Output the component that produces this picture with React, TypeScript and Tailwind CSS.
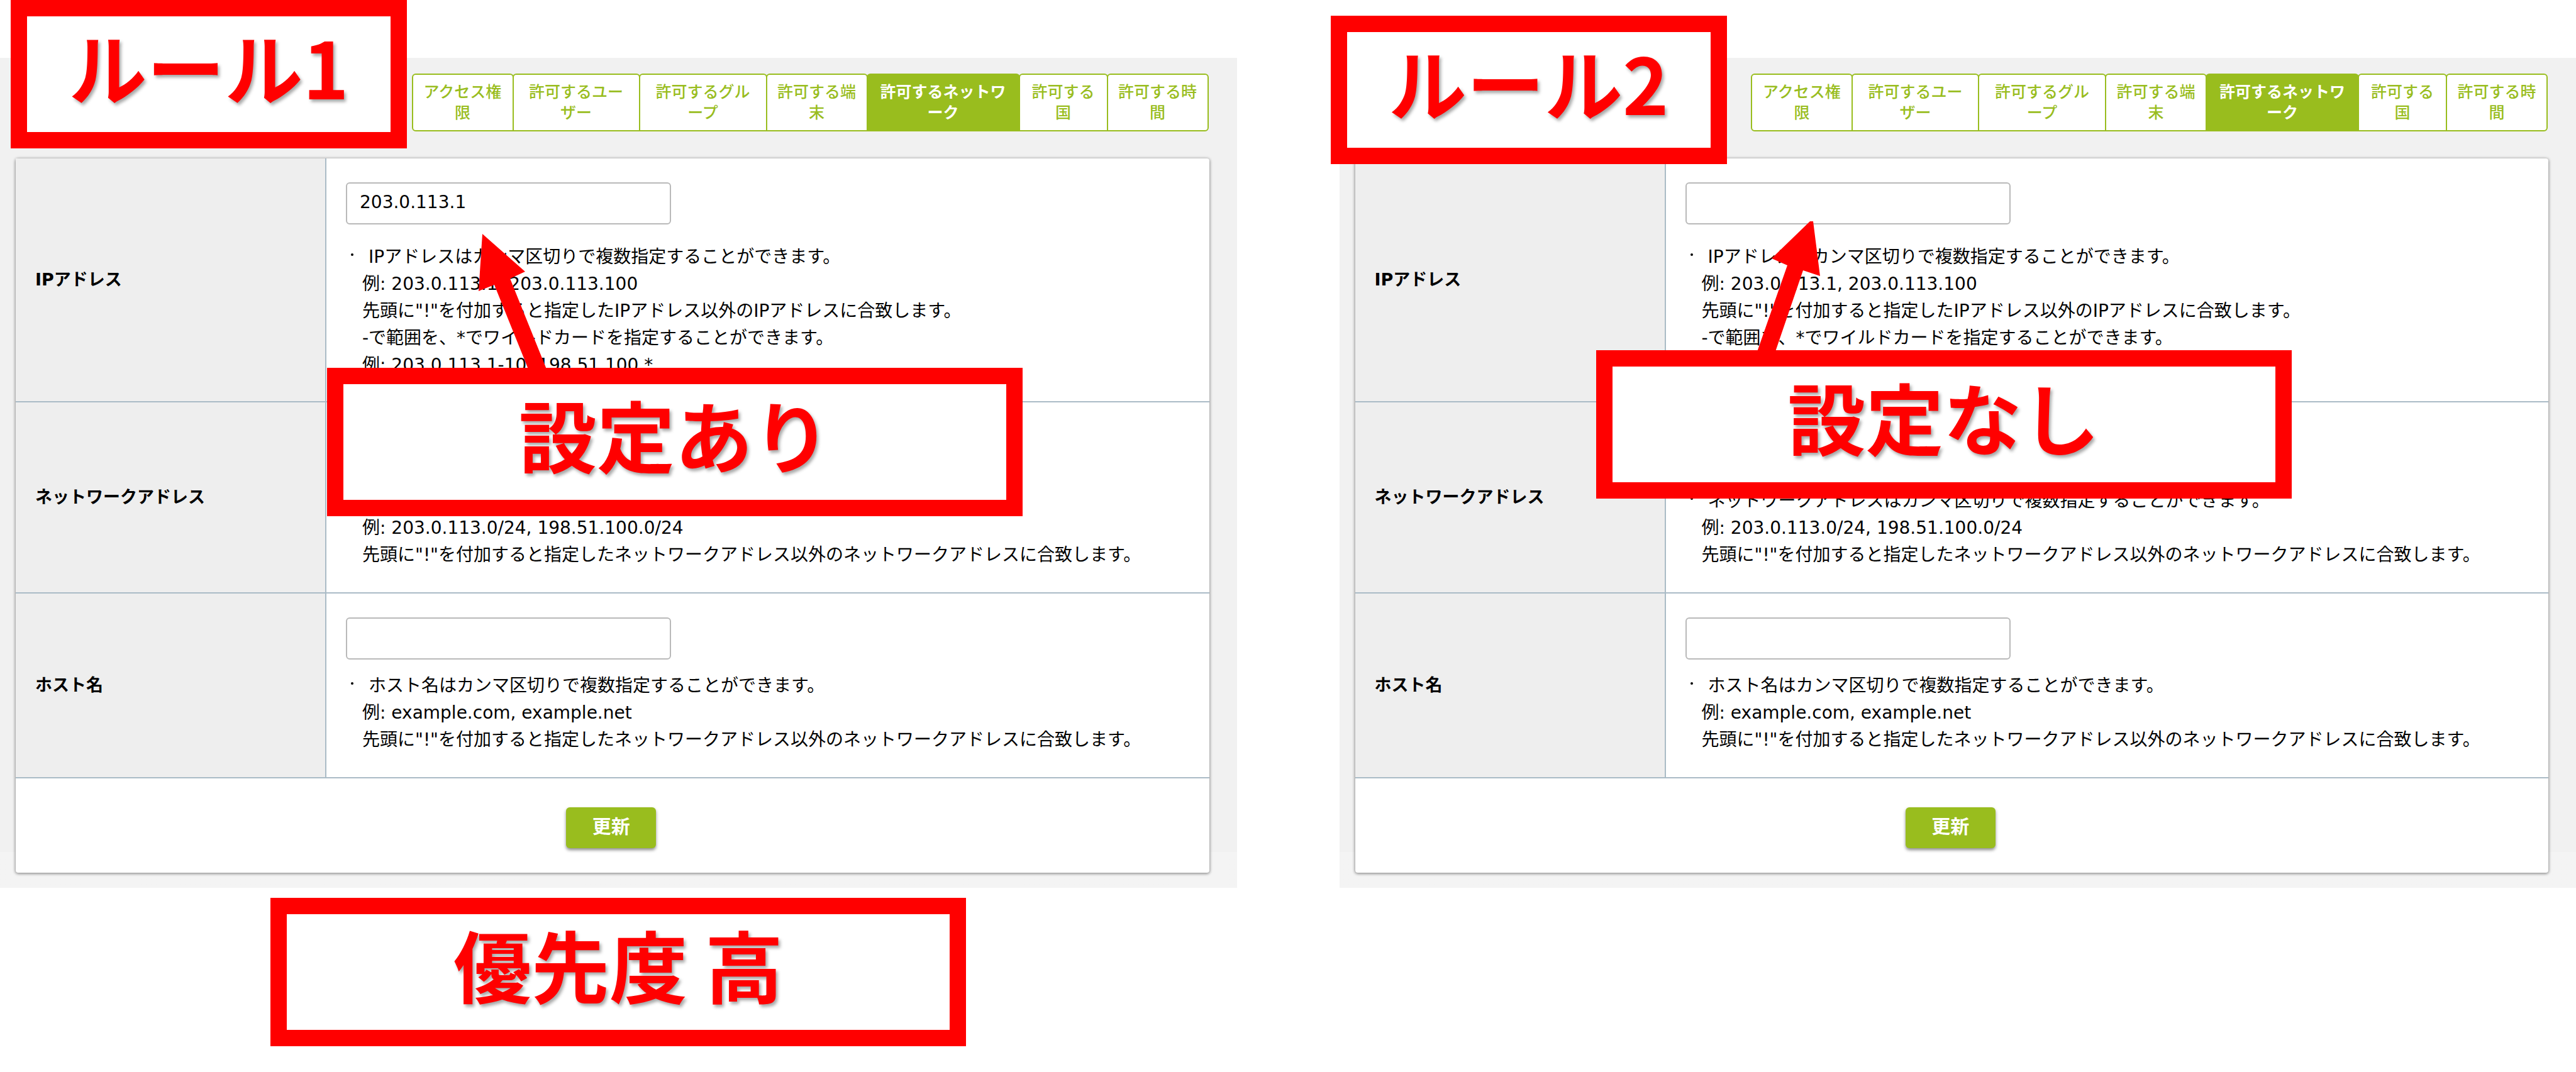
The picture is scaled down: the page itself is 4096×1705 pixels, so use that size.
import { useId } from 'react'
import type { ReactNode } from 'react'
import { clsx } from 'clsx'

interface Tab {
  label: string
  width: string
}

interface Field {
  label: string
  value: string
  hints: string[]
  cell: string
  gap: string
}

interface Callout {
  text: string
  box: string
}

interface RulePanelProps {
  title: Callout
  note: Callout
  fields: Field[]
  children: ReactNode
}

const ACTIVE_TAB = '許可するネットワーク'

const tabs: Tab[] = [
  { label: 'アクセス権限', width: 'w-[162px] px-3' },
  { label: '許可するユーザー', width: 'w-[203px] px-5' },
  { label: '許可するグループ', width: 'w-[204px] px-5' },
  { label: '許可する端末', width: 'w-[162px] px-3' },
  { label: '許可するネットワーク', width: 'w-[244px] px-4' },
  { label: '許可する国', width: 'w-[142px] px-4' },
  { label: '許可する時間', width: 'w-[162px] px-3' },
]

const baseFields: Field[] = [
  {
    label: 'IPアドレス',
    value: '',
    hints: [
      'IPアドレスはカンマ区切りで複数指定することができます。',
      '例: 203.0.113.1, 203.0.113.100',
      '先頭に"!"を付加すると指定したIPアドレス以外のIPアドレスに合致します。',
      '-で範囲を、*でワイルドカードを指定することができます。',
      '例: 203.0.113.1-10, 198.51.100.*',
    ],
    cell: 'pt-[38px] pb-9',
    gap: 'mt-[30px]',
  },
  {
    label: 'ネットワークアドレス',
    value: '',
    hints: [
      'ネットワークアドレスはカンマ区切りで複数指定することができます。',
      '例: 203.0.113.0/24, 198.51.100.0/24',
      '先頭に"!"を付加すると指定したネットワークアドレス以外のネットワークアドレスに合致します。',
    ],
    cell: 'pt-[38px] pb-[38px]',
    gap: 'mt-[30px]',
  },
  {
    label: 'ホスト名',
    value: '',
    hints: [
      'ホスト名はカンマ区切りで複数指定することができます。',
      '例: example.com, example.net',
      '先頭に"!"を付加すると指定したネットワークアドレス以外のネットワークアドレスに合致します。',
    ],
    cell: 'pt-[38px] pb-[38px]',
    gap: 'mt-5',
  },
]

const filledFields = baseFields.map((field, i) => (i === 0 ? { ...field, value: '203.0.113.1' } : field))

function CalloutBox({ text, box }: Callout) {
  return (
    <div
      className={clsx(
        "flex h-[236px] items-center justify-center border-[26px] border-[#ff0000] bg-white pb-7 font-['Noto_Sans_CJK_JP',sans-serif] text-[124px] leading-none font-bold whitespace-nowrap text-[#ff0000] [text-shadow:3px_4px_5px_rgba(0,0,0,0.35)]",
        box,
      )}
    >
      {text}
    </div>
  )
}

function TabBar() {
  return (
    <nav className="mr-[45px] flex justify-end">
      {tabs.map((tab, i) => (
        <button
          key={tab.label}
          type="button"
          className={clsx(
            'h-[92px] shrink-0 rounded-t-md border-2 border-[#99bd1e] text-center text-[25px] leading-[33px] break-all',
            tab.width,
            i > 0 && '-ml-0.5',
            i === 0 && 'rounded-bl-md',
            i === tabs.length - 1 && 'rounded-br-md',
            tab.label === ACTIVE_TAB ? 'bg-[#99bd1e] font-bold text-white' : 'bg-white font-medium text-[#99bd1e]',
          )}
        >
          {tab.label}
        </button>
      ))}
    </nav>
  )
}

function FieldRow({ label, value, hints, cell, gap }: Field) {
  const id = useId()

  return (
    <tr className="border-b-2 border-[#aabbc6]">
      <th
        scope="row"
        className="w-[493px] border-r-2 border-[#aabbc6] bg-[#eeeeee] pl-[31px] text-left text-[27px] font-bold"
      >
        <label htmlFor={id}>{label}</label>
      </th>
      <td className={clsx('pl-[31px]', cell)}>
        <input
          id={id}
          type="text"
          defaultValue={value}
          className="block h-[67px] w-[517px] rounded-md border-2 border-[#b9b9b9] bg-white px-5 pb-1 text-[28px]"
        />
        <ul className={clsx('text-[28px] leading-[43px]', gap)}>
          <li className="flex">
            <span className="flex h-9 w-[26px] items-center pl-2">
              <span className="size-1 rounded-full bg-black" />
            </span>
            <div>
              {hints.map((hint, i) => (
                <p key={hint} className={clsx(i === 0 && 'indent-2.5')}>
                  {hint}
                </p>
              ))}
            </div>
          </li>
        </ul>
      </td>
    </tr>
  )
}

function RulePanel({ title, note, fields, children }: RulePanelProps) {
  return (
    <section className="relative flex-1 pt-[92px]">
      <div className="bg-linear-to-b from-[#f1f1f1] from-[1263px] to-[#f4f4f4] to-[1263px] pt-[25px] pb-6">
        <TabBar />
        <form className="mt-[43px] mr-11 ml-[25px] rounded-sm bg-white shadow-[0_1px_4px_1px_rgba(0,0,0,0.4)]">
          <table className="w-full border-collapse">
            <tbody>
              {fields.map((field) => (
                <FieldRow key={field.label} {...field} />
              ))}
            </tbody>
          </table>
          <div className="flex justify-center pt-[46px] pr-1 pb-[39px]">
            <button
              type="submit"
              className="h-[65px] w-[143px] rounded-md bg-[#99bd1e] pb-1 text-[30px] leading-none font-bold text-white shadow-[0_3px_5px_rgba(0,0,0,0.45)]"
            >
              更新
            </button>
          </div>
        </form>
      </div>

      {/* Annotations lie over the panel */}
      {children}
      <CalloutBox {...title} />
      <CalloutBox {...note} />
    </section>
  )
}

export default function App() {
  return (
    <main className="min-h-screen overflow-x-hidden bg-white pb-9 font-['DejaVu_Sans','Noto_Sans_CJK_JP',sans-serif] text-black">
      <div className="flex gap-[163px]">
        <RulePanel
          title={{ text: 'ルール1', box: 'absolute top-0 left-[17px] w-[630px]' }}
          note={{ text: '設定あり', box: 'absolute top-[585px] left-[520px] w-[1106px]' }}
          fields={filledFields}
        >
          <svg className="absolute top-[372px] left-[761px] h-[220px] w-[110px]" viewBox="0 0 110 220" fill="#ff0000">
            <path d="M6 0L74 60L50 71L110 220H81L25 81L0 91Z" />
          </svg>
        </RulePanel>
        <RulePanel
          title={{ text: 'ルール2', box: 'absolute top-[25px] -left-3.5 w-[630px]' }}
          note={{ text: '設定なし', box: 'absolute top-[557px] left-[408px] w-[1106px]' }}
          fields={baseFields}
        >
          <svg className="absolute top-[352px] left-[663px] h-[210px] w-[102px]" viewBox="0 0 102 210" fill="#ff0000">
            <path d="M85 0H90L101 87L74 78L29 210H0L49 70L24 59Z" />
          </svg>
        </RulePanel>
      </div>
      <CalloutBox text="優先度 高" box="mt-4 ml-[430px] w-[1106px]" />
    </main>
  )
}
